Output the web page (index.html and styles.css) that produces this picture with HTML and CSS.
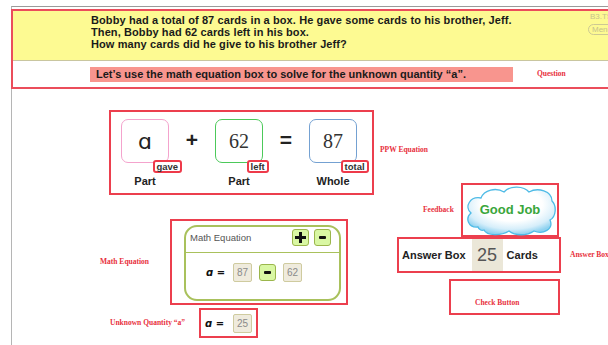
FILE: index.html
```html
<!DOCTYPE html>
<html>
	<head>
		<meta charset="UTF-8">
		<title>Math Equation Box</title>
		<link rel="stylesheet" href="styles.css">
	</head>
	<body>
		<div id="sheet">
			<div class="problem">
				<div class="story">
					<p class="story-text">
						Bobby had a total of 87 cards in a box. He gave some cards to his brother, Jeff.<br>
						Then, Bobby had 62 cards left in his box.<br>
						How many cards did he give to his brother Jeff?
					</p>
					<div class="meta">
						<span class="code">B3.T5</span>
						<span class="menu">Menu</span>
					</div>
				</div>
				<div class="prompt">
					<p class="prompt-text">Let’s use the math equation box to solve for the unknown quantity “a”.</p>
					<span class="note note-q">Question</span>
				</div>
			</div>

			<div class="stage">
				<div class="col-left">
					<div class="row row-ppw">
						<div class="frame ppw">
							<div class="part">
								<div class="slot pink"><span class="var">ɑ</span><em class="tag">gave</em></div>
								<span class="cap">Part</span>
							</div>
							<span class="op">+</span>
							<div class="part">
								<div class="slot green"><span class="num">62</span><em class="tag">left</em></div>
								<span class="cap">Part</span>
							</div>
							<span class="op">=</span>
							<div class="part">
								<div class="slot blue"><span class="num">87</span><em class="tag">total</em></div>
								<span class="cap">Whole</span>
							</div>
						</div>
						<span class="note note-ppw">PPW Equation</span>
					</div>

					<div class="row row-math">
						<span class="note note-math">Math Equation</span>
						<div class="frame eq-frame">
							<div class="eq-panel">
								<div class="eq-head">
									<span class="eq-title">Math Equation</span>
									<span class="btn btn-plus"></span>
									<span class="btn btn-minus"></span>
								</div>
								<div class="eq-body">
									<span class="lhs">ɑ =</span>
									<span class="val">87</span>
									<span class="btn btn-minus mid"></span>
									<span class="val">62</span>
								</div>
							</div>
						</div>
					</div>

					<div class="row row-unknown">
						<span class="note note-unknown">Unknown Quantity “a”</span>
						<div class="frame unknown">
							<span class="lhs">ɑ =</span>
							<span class="val">25</span>
						</div>
					</div>
				</div>

				<div class="col-right">
					<div class="row row-feedback">
						<span class="note note-fb">Feedback</span>
						<div class="frame feedback">
							<div class="cloud">
								<svg width="94" height="50" viewBox="0 0 94 50">
									<defs>
										<radialGradient id="cloudFill" cx="50%" cy="36%" r="64%">
											<stop offset="0" stop-color="#ffffff"/>
											<stop offset="0.55" stop-color="#ffffff"/>
											<stop offset="0.82" stop-color="#d6eefa"/>
											<stop offset="1" stop-color="#8fd2f0"/>
										</radialGradient>
									</defs>
									<path d="M15,41 C5,42 2,32 8,27 C1,21 7,10 18,12 C21,4 33,1 41,6 C47,-1 61,0 66,6 C75,1 89,5 89,15 C94,20 93,31 87,34 C91,43 80,49 71,45 C64,50 52,50 46,45 C38,50 24,50 21,44 C19,45 16,44 15,41 Z" fill="url(#cloudFill)" stroke="#4fbbe6" stroke-width="1.3"/>
								</svg>
								<span class="good">Good Job</span>
							</div>
						</div>
					</div>

					<div class="row row-answer">
						<div class="frame answer">
							<span class="ans-label">Answer Box</span>
							<span class="ans-val">25</span>
							<span class="ans-label">Cards</span>
						</div>
						<span class="note note-ans">Answer Box</span>
					</div>

					<div class="frame check">
						<span class="note">Check Button</span>
					</div>
				</div>
			</div>
		</div>
	</body>
</html>
```

FILE: styles.css
```css
*{
	padding: 0px;margin: 0px;
	box-sizing: border-box;
}
body{
	width: 608px;height: 345px;
	overflow: hidden;
	background: #fff;
	font-family: "Liberation Sans", Arial, sans-serif;
	color: #222;
}
#sheet{
	margin: 6px 0 0 11px;
	height: 339px;
	border-top: 1px solid #9a9a9a;
	border-left: 1px solid #b5b5b5;
}

/* problem header */
.problem{
	width: 640px;
	margin: 2px 0 0 -1px;
	border: 2px solid #eb4d5b;
}
.story{
	display: flex;
	height: 50px;
	background: #fdfa92;
	border-bottom: 1px solid #c9c6a0;
}
.story-text{
	width: 575px;
	padding: 3px 0 0 78px;
	font-size: 11px;font-weight: bold;
	line-height: 12px;
	letter-spacing: 0.1px;
	color: #1a1a1a;
}
.meta{
	display: flex;
	flex-direction: column;
	align-items: flex-start;
	padding-top: 1px;
	color: #c6c28c;
	font-size: 8px;
}
.code{
	line-height: 10px;
	margin-left: 2px;
}
.menu{
	margin-top: 2px;
	padding: 0 3px;
	line-height: 9px;
	border: 1px solid #cdc993;
	border-radius: 6px;
}
.prompt{
	display: flex;
	align-items: flex-start;
	height: 26px;
}
.prompt-text{
	width: 423px;height: 15px;
	margin: 6px 0 0 77px;
	padding-left: 6px;
	background: #f8958e;
	font-size: 11px;font-weight: bold;
	line-height: 15px;
	color: #1a1a1a;
}

/* red annotations */
.note{
	font-family: "Liberation Serif", "Times New Roman", serif;
	font-size: 7.5px;font-weight: bold;
	color: #e8303d;
	white-space: nowrap;
	line-height: 10px;
}
.note-q{
	margin: 8px 0 0 24px;
}
.frame{
	border: 2px solid #ec3f4e;
}

/* stage */
.stage{
	display: flex;
	align-items: flex-start;
}
.col-left{
	width: 385px;
	flex-shrink: 0;
}
.row{
	display: flex;
	align-items: center;
}
.row-ppw{
	margin-top: 21px;
	padding-left: 97px;
}
.note-ppw{
	margin-left: 6px;
	margin-top: -5px;
}
.ppw{
	display: flex;
	align-items: flex-start;
	width: 265px;height: 85px;
	padding: 7px 0 0 10px;
	flex-shrink: 0;
}
.part{
	display: flex;
	flex-direction: column;
	align-items: center;
	width: 48px;
}
.slot{
	position: relative;
	display: flex;
	align-items: center;
	justify-content: center;
	width: 48px;height: 44px;
	border: 1.5px solid #999;
	border-radius: 7px;
}
.slot.pink{border-color: #f4a3cd;}
.slot.green{border-color: #4cc95a;}
.slot.blue{border-color: #74a1d2;}
.var{
	font-family: "DejaVu Sans", sans-serif;
	font-size: 22px;
	color: #222;
}
.num{
	font-family: "Liberation Serif", "Times New Roman", serif;
	font-size: 20px;
	color: #333;
}
.tag{
	position: absolute;
	left: 30.5px;top: 39.5px;
	height: 13px;
	padding: 0 2px;
	background: #fff;
	border: 2px solid #ee3a4a;
	border-radius: 3px;
	font-style: normal;
	font-size: 9.5px;font-weight: bold;
	line-height: 9px;
	color: #333;
}
.cap{
	margin-top: 12px;
	font-size: 11px;font-weight: bold;
	line-height: 12px;
	color: #222;
}
.op{
	width: 46px;height: 44px;
	text-align: center;
	font-size: 21px;font-weight: bold;
	line-height: 42px;
	color: #222;
}

/* math equation box */
.row-math{
	margin-top: 24px;
	padding-left: 88px;
}
.note-math{
	width: 70px;
}
.eq-frame{
	width: 178px;height: 86px;
	padding: 4px 0 0 12px;
}
.eq-panel{
	width: 157px;height: 76px;
	border: 2px solid #a9c15c;
	border-radius: 13px;
}
.eq-head{
	display: flex;
	align-items: flex-start;
	gap: 5px;
	height: 25.5px;
	padding: 0 8px 0 4px;
	border-bottom: 1.5px solid #a9c15c;
}
.eq-title{
	flex: 1;
	font-size: 9.5px;
	line-height: 21px;
	color: #555;
}
.btn{
	position: relative;
	margin-top: 2px;
	width: 17px;height: 17px;
	background: #d9f7a3;
	border: 1px solid #9bb64c;
	border-radius: 3px;
	flex-shrink: 0;
}
.btn::before,.btn-plus::after{
	content: "";
	position: absolute;
	left: 50%;top: 50%;
	background: #111;
}
.btn-minus::before{
	width: 7px;height: 3px;
	margin: -1.5px 0 0 -3.5px;
	border-radius: 1px;
}
.btn-plus::before{
	width: 11px;height: 3px;
	margin: -1.5px 0 0 -5.5px;
}
.btn-plus::after{
	width: 3px;height: 11px;
	margin: -5.5px 0 0 -1.5px;
}
.btn.mid{
	margin: 0 7px;
}
.eq-body{
	display: flex;
	align-items: center;
	padding: 10.5px 0 0 20px;
}
.lhs{
	width: 27px;
	font-family: "DejaVu Sans", sans-serif;
	font-size: 10px;font-weight: bold;font-style: italic;
	color: #111;
}
.val{
	width: 19px;height: 19px;
	background: #efebdd;
	border: 1px solid #cfcb9f;
	border-radius: 2px;
	text-align: center;
	font-size: 10px;
	line-height: 17px;
	color: #8a8a8a;
}

/* unknown quantity */
.row-unknown{
	margin-top: 3px;
	padding-left: 98px;
}
.note-unknown{
	width: 89px;
}
.unknown{
	display: flex;
	align-items: center;
	width: 59px;height: 30px;
	padding-left: 4px;
}
.unknown .lhs{
	width: 28px;
}

/* right column */
.col-right{
	margin-top: 94px;
	width: 211px;
	flex-shrink: 0;
}
.row-feedback{
	padding-left: 26px;
}
.note-fb{
	width: 38px;
}
.feedback{
	width: 98px;height: 54px;
	padding-top: 1px;
}
.cloud{
	position: relative;
	width: 94px;height: 50px;
}
.cloud svg{
	display: block;
}
.good{
	position: absolute;
	left: 0;top: 16px;
	width: 94px;
	text-align: center;
	font-size: 13px;font-weight: bold;
	line-height: 16px;
	color: #3aa63b;
}
.answer{
	display: flex;
	align-items: center;
	width: 164px;height: 36px;
	padding-left: 3px;
	flex-shrink: 0;
}
.ans-label{
	font-size: 11px;font-weight: bold;
	color: #222;
}
.ans-val{
	width: 31px;height: 32px;
	margin: 0 4px 0 6px;
	background: #ebe7d8;
	text-align: center;
	font-size: 18px;
	line-height: 32px;
	color: #555;
}
.note-ans{
	margin-left: 9px;
}
.check{
	width: 111px;height: 36px;
	margin: 6px 0 0 52px;
	padding: 17px 0 0 24px;
}
.check .note{
	display: block;
}
```
